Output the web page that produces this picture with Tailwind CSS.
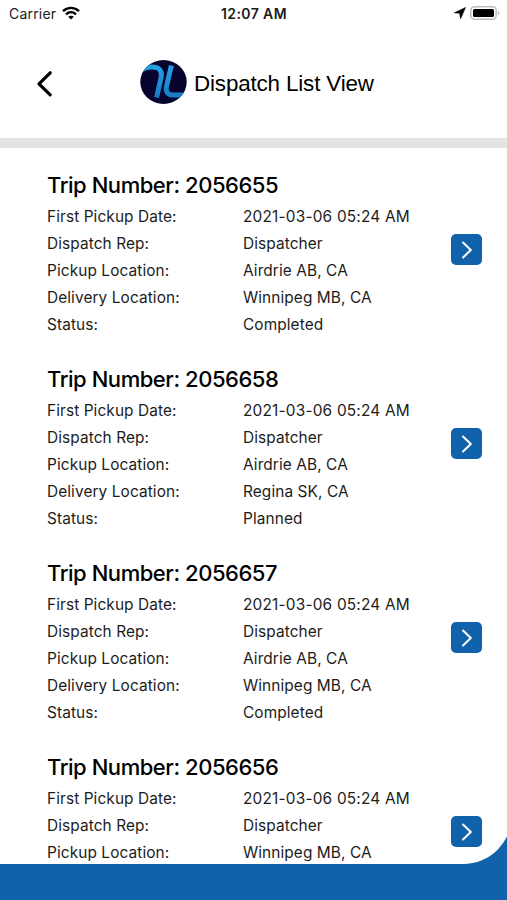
<!DOCTYPE html>
<html lang="en">
<head>
  <meta charset="UTF-8">
  <meta name="viewport" content="width=device-width, initial-scale=1.0">
  <title>Dispatch List View</title>
  <script src="https://cdn.jsdelivr.net/npm/@tailwindcss/browser@4"></script>
</head>
<body class="bg-[#1062ab] font-['Inter',sans-serif] text-[#1c1c1c]">
  <div class="h-[900px] w-full overflow-hidden">
    <div class="h-[864px] w-[512px] overflow-hidden rounded-br-[49px] bg-white">

      <!-- Status bar -->
      <div class="grid h-[26px] w-[507px] grid-cols-3 items-center pr-[7px] pl-[9px] text-[14px]">
        <div class="flex items-center gap-[6px]">
          <span class="tracking-[0.2px]">Carrier</span>
          <svg class="h-[14px] w-[18px]" viewBox="0 0 18 14" fill="none" stroke="#000" stroke-width="2.4">
            <path d="M1 5.2C5.6 .7 12.4 .7 17 5.2" />
            <path d="M4 8.3C6.9 5.5 11.1 5.5 14 8.3" />
            <path d="M9 13.6L6.2 10.8C7.8 9.4 10.2 9.4 11.8 10.8Z" fill="#000" stroke="none" />
          </svg>
        </div>
        <span class="-ml-px text-center font-semibold tracking-[0.4px] whitespace-nowrap">12:07 AM</span>
        <div class="flex items-center justify-end gap-1">
          <svg class="h-3 w-3" viewBox="0 0 12 12"><path d="M11.5 .5L.3 5.8L5.7 6.2L6.6 11.7Z" stroke="#000" stroke-width=".6" /></svg>
          <svg class="h-[14px] w-[30px]" viewBox="0 0 30 14">
            <rect x=".8" y=".8" width="25.4" height="12.4" rx="3.6" fill="#fff" stroke="#bdbdbd" stroke-width="1.5" />
            <rect x="3" y="3" width="21" height="8" rx="1.5" />
            <path d="M27.8 4.7C30 5.5 30 8.5 27.8 9.3Z" fill="#bdbdbd" />
          </svg>
        </div>
      </div>

      <!-- Header -->
      <header class="flex h-[112px] w-[507px] items-start pt-[2px] pl-[36px]">
        <svg class="mt-[42px] h-7 w-[18px]" viewBox="0 0 18 28" fill="none" stroke="#000" stroke-width="3.2" stroke-linecap="round" stroke-linejoin="round">
          <path d="M14.2 2.8L3 13.8L14.2 24.8" />
        </svg>
        <svg class="mt-[32px] ml-[86px] h-[46px] w-[47px]" viewBox="0 0 47 46">
          <defs>
            <clipPath id="disc"><ellipse cx="23.5" cy="22" rx="23.2" ry="22" /></clipPath>
            <linearGradient id="stroke" x1="0" y1="5" x2="0" y2="40" gradientUnits="userSpaceOnUse">
              <stop offset="0" stop-color="#26a0e4" />
              <stop offset="1" stop-color="#1679c2" />
            </linearGradient>
          </defs>
          <g clip-path="url(#disc)">
            <rect width="47" height="46" fill="#06042f" />
            <g fill="none" stroke="url(#stroke)" stroke-width="5">
              <path d="M2 9.5C5 7.6 8 7 12 7C19.5 7 22.6 11 21 18L16.6 37.5" />
              <path d="M31.4 5.5L26.8 25C25 32.5 28 35 34 35H45" />
            </g>
          </g>
        </svg>
        <h1 class="mt-[40px] ml-[7px] font-['Liberation_Sans',sans-serif] text-[22.4px] leading-8 tracking-[-0.15px] text-black">Dispatch List View</h1>
      </header>
      <div class="h-[10px] bg-[#e4e4e4]"></div>

      <!-- Trips -->
      <main id="trips" class="pt-[21px]"></main>
    </div>
  </div>

  <script>
    const trips = [
      { number: "2056655", rows: [["Pickup Location:", "Airdrie AB, CA"], ["Delivery Location:", "Winnipeg MB, CA"], ["Status:", "Completed"]] },
      { number: "2056658", rows: [["Pickup Location:", "Airdrie AB, CA"], ["Delivery Location:", "Regina SK, CA"], ["Status:", "Planned"]] },
      { number: "2056657", rows: [["Pickup Location:", "Airdrie AB, CA"], ["Delivery Location:", "Winnipeg MB, CA"], ["Status:", "Completed"]] },
      { number: "2056656", rows: [["Pickup Location:", "Winnipeg MB, CA"]] },
    ];

    document.getElementById("trips").innerHTML = trips.map(trip => `
      <section class="flex h-[194px] pl-[47px]">
        <div class="w-[404px]">
          <h2 class="h-[33px] text-[22px] leading-[33px] font-medium tracking-[-0.45px] text-black">Trip Number: ${trip.number}</h2>
          <dl class="mt-px grid grid-cols-[196px_1fr] text-[15.4px] leading-[27px] tracking-[0.1px]">
            <dt>First Pickup Date:</dt><dd class="tracking-[0.2px]">2021-03-06 05:24 AM</dd>
            <dt>Dispatch Rep:</dt><dd>Dispatcher</dd>
            ${trip.rows.map(([label, value]) => `<dt>${label}</dt><dd>${value}</dd>`).join("")}
          </dl>
        </div>
        <button class="mt-[65px] flex h-[31px] w-[31px] items-center justify-center rounded-[5px] bg-[#1062ab]">
          <svg class="h-[18px] w-[10px]" viewBox="0 0 10 18" fill="none" stroke="#fff" stroke-width="2" stroke-linecap="round" stroke-linejoin="round">
            <path d="M1 1.5L8.8 9L1 16.5" />
          </svg>
        </button>
      </section>
    `).join("");
  </script>
</body>
</html>
